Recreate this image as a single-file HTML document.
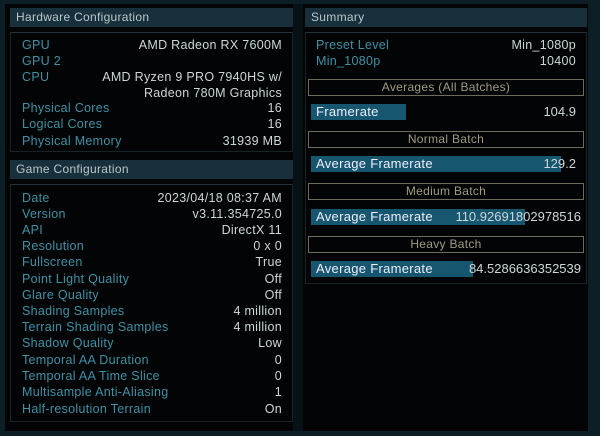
<!DOCTYPE html>
<html><head><style>
*{margin:0;padding:0;box-sizing:border-box}
body{width:600px;height:436px;background:#0d1f26;position:relative;overflow:hidden;font-family:"Liberation Sans",sans-serif;font-size:12.5px;letter-spacing:0.3px}
.a{position:absolute}
.inner{left:5px;top:4px;width:590px;height:427px;background:#020405}
.hdr{background:#18303b;color:#b8c6cc;padding-left:6px;line-height:19px;height:19px;font-size:12px}
.box{border:1px solid #182328;border-top-color:#24323a}
.row{position:absolute;left:22px;width:260px;height:16px;line-height:16px}
.l{color:#3f92a6;position:absolute;left:0}
.v{color:#cdd6d8;position:absolute;right:0;text-align:right}
.bt{position:absolute;left:308px;width:276px;height:17px;border:1px solid #6e6c58;color:#a09c80;text-align:center;line-height:15px;font-size:12px}
.bar{position:absolute;left:311px;height:16px;background:#17566f;color:#eef;line-height:16px;padding-left:5px;font-size:13px}
.bv{position:absolute;right:24px;color:#cdd6d8;line-height:16px;font-size:13px;letter-spacing:0}
</style></head><body>
<div class="a inner"></div>
<div class="a" style="left:293px;top:4px;width:10px;height:427px;background:#081216"></div>
<div class="a" style="left:588px;top:4px;width:7px;height:427px;background:#0d1f26"></div>
<div class="a hdr" style="left:10px;top:8px;width:283px">Hardware Configuration</div>
<div class="a box" style="left:10px;top:32px;width:283px;height:120px"></div>
<div class="row" style="top:37px"><span class="l">GPU</span><span class="v">AMD Radeon RX 7600M</span></div>
<div class="row" style="top:53px"><span class="l">GPU 2</span></div>
<div class="row" style="top:69px;height:32px"><span class="l">CPU</span><span class="v">AMD Ryzen 9 PRO 7940HS w/<br>Radeon 780M Graphics</span></div>
<div class="row" style="top:100px"><span class="l">Physical Cores</span><span class="v">16</span></div>
<div class="row" style="top:116px"><span class="l">Logical Cores</span><span class="v">16</span></div>
<div class="row" style="top:133px"><span class="l">Physical Memory</span><span class="v">31939 MB</span></div>
<div class="a hdr" style="left:10px;top:160px;width:283px">Game Configuration</div>
<div class="a box" style="left:10px;top:184px;width:283px;height:238px"></div>
<div class="row" style="top:190px"><span class="l">Date</span><span class="v">2023/04/18 08:37 AM</span></div>
<div class="row" style="top:206px"><span class="l">Version</span><span class="v">v3.11.354725.0</span></div>
<div class="row" style="top:222px"><span class="l">API</span><span class="v">DirectX 11</span></div>
<div class="row" style="top:238px"><span class="l">Resolution</span><span class="v">0 x 0</span></div>
<div class="row" style="top:254px"><span class="l">Fullscreen</span><span class="v">True</span></div>
<div class="row" style="top:271px"><span class="l">Point Light Quality</span><span class="v">Off</span></div>
<div class="row" style="top:287px"><span class="l">Glare Quality</span><span class="v">Off</span></div>
<div class="row" style="top:303px"><span class="l">Shading Samples</span><span class="v">4 million</span></div>
<div class="row" style="top:319px"><span class="l">Terrain Shading Samples</span><span class="v">4 million</span></div>
<div class="row" style="top:335px"><span class="l">Shadow Quality</span><span class="v">Low</span></div>
<div class="row" style="top:352px"><span class="l">Temporal AA Duration</span><span class="v">0</span></div>
<div class="row" style="top:368px"><span class="l">Temporal AA Time Slice</span><span class="v">0</span></div>
<div class="row" style="top:384px"><span class="l">Multisample Anti-Aliasing</span><span class="v">1</span></div>
<div class="row" style="top:401px"><span class="l">Half-resolution Terrain</span><span class="v">On</span></div>

<div class="a hdr" style="left:305px;top:8px;width:282px">Summary</div>
<div class="a box" style="left:305px;top:32px;width:282px;height:252px"></div>
<div class="row" style="top:37px;left:316px;width:260px"><span class="l">Preset Level</span><span class="v">Min_1080p</span></div>
<div class="row" style="top:53px;left:316px;width:260px"><span class="l">Min_1080p</span><span class="v">10400</span></div>
<div class="bt" style="top:79px">Averages (All Batches)</div>
<div class="bar" style="top:104px;width:95px">Framerate</div><div class="bv" style="top:104px">104.9</div>
<div class="bt" style="top:131px">Normal Batch</div>
<div class="bar" style="top:156px;width:250px">Average Framerate</div><div class="bv" style="top:156px">129.2</div>
<div class="bt" style="top:183px">Medium Batch</div>
<div class="bar" style="top:209px;width:214px">Average Framerate</div><div class="bv" style="top:209px;right:19px">110.92691802978516</div>
<div class="bt" style="top:236px">Heavy Batch</div>
<div class="bar" style="top:261px;width:162px">Average Framerate</div><div class="bv" style="top:261px;right:19px">84.5286636352539</div>
</body></html>
